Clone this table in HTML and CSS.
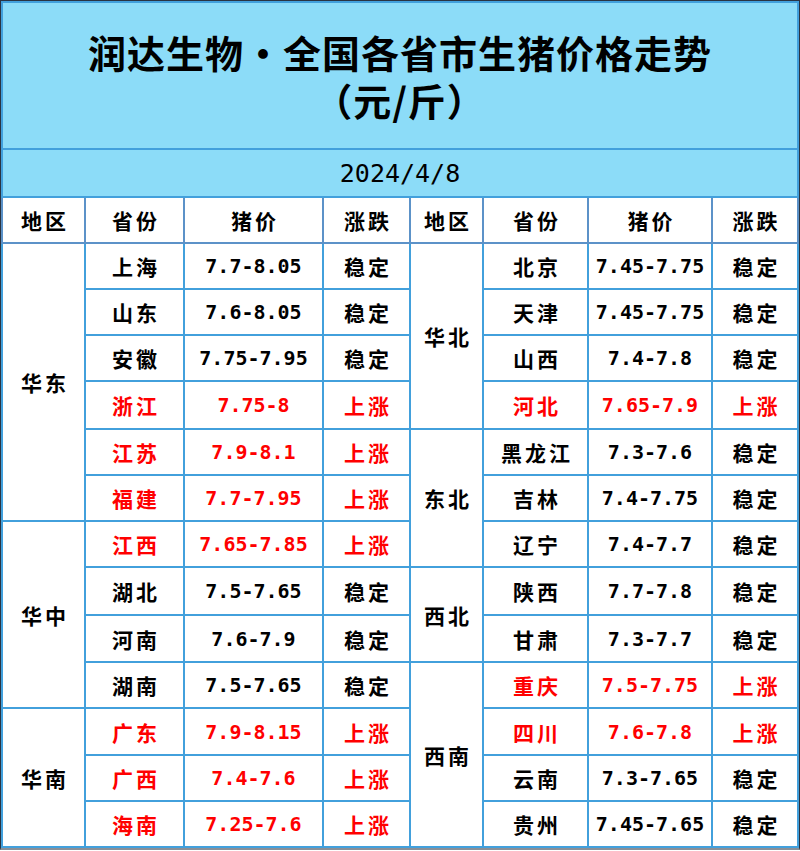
FILE: index.html
```html
<!DOCTYPE html>
<html lang="zh-CN">
<head>
<meta charset="utf-8">
<title>润达生物·全国各省市生猪价格走势</title>
<link rel="stylesheet" href="styles.css">
</head>
<body>
<div class="sheet">
<table class="grid">
  <colgroup>
    <col class="c1"><col class="c2"><col class="c3"><col class="c4">
    <col class="c5"><col class="c6"><col class="c7"><col class="c8">
  </colgroup>
  <tr class="r-title"><td colspan="8" class="title"><div class="tl">润达生物·全国各省市生猪价格走势</div><div class="tl">（元/斤）</div></td></tr>
  <tr class="r-date"><td colspan="8" class="date">2024/4/8</td></tr>
  <tr class="r-head">
    <th>地区</th><th>省份</th><th>猪价</th><th>涨跌</th>
    <th>地区</th><th>省份</th><th>猪价</th><th>涨跌</th>
  </tr>
  <tr class="h46">
    <td rowspan="6" class="reg">华东</td>
    <td class="cn">上海</td><td class="num">7.7-8.05</td><td class="cn">稳定</td>
    <td rowspan="4" class="reg">华北</td>
    <td class="cn">北京</td><td class="num">7.45-7.75</td><td class="cn">稳定</td>
  </tr>
  <tr class="h46">
    <td class="cn">山东</td><td class="num">7.6-8.05</td><td class="cn">稳定</td>
    <td class="cn">天津</td><td class="num">7.45-7.75</td><td class="cn">稳定</td>
  </tr>
  <tr class="h46">
    <td class="cn">安徽</td><td class="num">7.75-7.95</td><td class="cn">稳定</td>
    <td class="cn">山西</td><td class="num">7.4-7.8</td><td class="cn">稳定</td>
  </tr>
  <tr class="h48">
    <td class="cn up">浙江</td><td class="num up">7.75-8</td><td class="cn up">上涨</td>
    <td class="cn up">河北</td><td class="num up">7.65-7.9</td><td class="cn up">上涨</td>
  </tr>
  <tr class="h46">
    <td class="cn up">江苏</td><td class="num up">7.9-8.1</td><td class="cn up">上涨</td>
    <td rowspan="3" class="reg">东北</td>
    <td class="cn">黑龙江</td><td class="num">7.3-7.6</td><td class="cn">稳定</td>
  </tr>
  <tr class="h46">
    <td class="cn up">福建</td><td class="num up">7.7-7.95</td><td class="cn up">上涨</td>
    <td class="cn">吉林</td><td class="num">7.4-7.75</td><td class="cn">稳定</td>
  </tr>
  <tr class="h46">
    <td rowspan="4" class="reg">华中</td>
    <td class="cn up">江西</td><td class="num up">7.65-7.85</td><td class="cn up">上涨</td>
    <td class="cn">辽宁</td><td class="num">7.4-7.7</td><td class="cn">稳定</td>
  </tr>
  <tr class="h48">
    <td class="cn">湖北</td><td class="num">7.5-7.65</td><td class="cn">稳定</td>
    <td rowspan="2" class="reg">西北</td>
    <td class="cn">陕西</td><td class="num">7.7-7.8</td><td class="cn">稳定</td>
  </tr>
  <tr class="h47">
    <td class="cn">河南</td><td class="num">7.6-7.9</td><td class="cn">稳定</td>
    <td class="cn">甘肃</td><td class="num">7.3-7.7</td><td class="cn">稳定</td>
  </tr>
  <tr class="h46">
    <td class="cn">湖南</td><td class="num">7.5-7.65</td><td class="cn">稳定</td>
    <td rowspan="4" class="reg">西南</td>
    <td class="cn up">重庆</td><td class="num up">7.5-7.75</td><td class="cn up">上涨</td>
  </tr>
  <tr class="h47">
    <td rowspan="3" class="reg">华南</td>
    <td class="cn up">广东</td><td class="num up">7.9-8.15</td><td class="cn up">上涨</td>
    <td class="cn up">四川</td><td class="num up">7.6-7.8</td><td class="cn up">上涨</td>
  </tr>
  <tr class="h46">
    <td class="cn up">广西</td><td class="num up">7.4-7.6</td><td class="cn up">上涨</td>
    <td class="cn">云南</td><td class="num">7.3-7.65</td><td class="cn">稳定</td>
  </tr>
  <tr class="h46">
    <td class="cn up">海南</td><td class="num up">7.25-7.6</td><td class="cn up">上涨</td>
    <td class="cn">贵州</td><td class="num">7.45-7.65</td><td class="cn">稳定</td>
  </tr>
</table>
</div>
</body>
</html>
```

FILE: styles.css
```css
html, body {
  margin: 0;
  padding: 0;
  background: #ffffff;
}

.sheet {
  width: 798px;
  border-top: 1px solid #2a3442;
  border-left: 1px solid #2a3442;
  border-right: 1px solid #2a3442;
  border-bottom: 2px solid #8a8f96;
}

.grid {
  width: 798px;
  table-layout: fixed;
  border-collapse: collapse;
  font-family: "Noto Sans CJK SC", "Noto Sans", sans-serif;
  color: #000000;
}

.c1 { width: 83px; }
.c2 { width: 99px; }
.c3 { width: 139px; }
.c4 { width: 87px; }
.c5 { width: 73px; }
.c6 { width: 105px; }
.c7 { width: 124px; }
.c8 { width: 86px; }

.grid td, .grid th {
  border: 2px solid #42a0dc;
  padding: 0;
  text-align: center;
  vertical-align: middle;
}

.r-title { height: 147px; }
.r-date { height: 48px; }
.r-head { height: 46px; }
.h45 { height: 45px; }
.h46 { height: 46px; }
.h47 { height: 47px; }
.h48 { height: 48px; }

.title {
  background: #8cdcf8;
  font-size: 38px;
  font-weight: 700;
  letter-spacing: 1px;
  padding-top: 6px;
  border-top: none;
  border-left: none;
  border-right: none;
  border-bottom: 2px solid #4f8fc8;
}

.tl {
  height: 48px;
  line-height: 48px;
  overflow: visible;
}

.date {
  background: #8cdcf8;
  font-family: "DejaVu Sans Mono", "Liberation Mono", monospace;
  font-size: 25px;
  font-weight: 400;
  border-left: none;
  border-right: none;
  border-top: 2px solid #4f8fc8;
  border-bottom: 2px solid #5a90c8;
}

.grid th {
  font-size: 21px;
  font-weight: 700;
  letter-spacing: 3px;
  text-indent: 3px;
  border-color: #5c92c8;
  background: #ffffff;
}

.reg {
  font-size: 21px;
  font-weight: 700;
  letter-spacing: 3px;
  text-indent: 3px;
  border-color: #5c92c8;
}

.cn {
  font-size: 21px;
  font-weight: 700;
  letter-spacing: 3px;
  text-indent: 3px;
}

.num {
  font-family: "DejaVu Sans Mono", "Liberation Mono", monospace;
  font-size: 20px;
  font-weight: 700;
}

.up {
  color: #ff0000;
}
```
